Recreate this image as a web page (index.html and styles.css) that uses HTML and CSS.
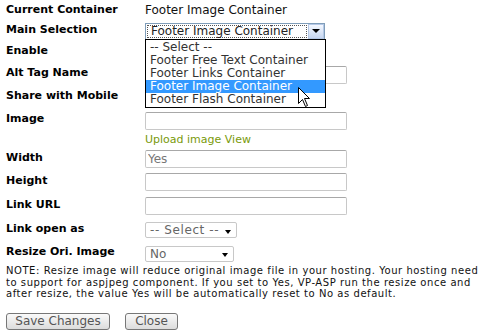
FILE: index.html
```html
<!DOCTYPE html>
<html lang="en">

<head>
    <meta charset="UTF-8">
    <title>Footer Container</title>
    <link rel="stylesheet" href="styles.css">
</head>

<body>

    <div class="form">
        <div class="label">Current Container</div>
        <div class="value">Footer Image Container</div>

        <div class="label">Main Selection</div>
        <div class="field">
            <div class="combo">
                <div class="combo-text">Footer Image Container</div>
                <div class="combo-btn"><span class="arrow"></span></div>
                <ul class="combo-list">
                    <li>-- Select --</li>
                    <li>Footer Free Text Container</li>
                    <li>Footer Links Container</li>
                    <li class="active">Footer Image Container</li>
                    <li>Footer Flash Container</li>
                </ul>
                <svg class="pointer" width="13" height="21" viewBox="0 0 13 21">
                    <path d="M0.5 0.5 L0.5 16.5 L4.5 12.5 L7.5 19.5 L9.5 18.5 L6.5 11.5 L11.5 11.5 Z" fill="#fff" stroke="#000" stroke-width="1"/>
                </svg>
            </div>
        </div>

        <div class="label">Enable</div>
        <div class="field"></div>

        <div class="label">Alt Tag Name</div>
        <div class="field"><input class="text" type="text"></div>

        <div class="label">Share with Mobile</div>
        <div class="field"></div>

        <div class="label">Image</div>
        <div class="field"><input class="text" type="text"></div>

        <div class="label"></div>
        <div class="field"><a class="upload" href="#">Upload image View</a></div>

        <div class="label">Width</div>
        <div class="field"><input class="text" type="text" value="Yes"></div>

        <div class="label">Height</div>
        <div class="field"><input class="text" type="text"></div>

        <div class="label">Link URL</div>
        <div class="field"><input class="text" type="text"></div>

        <div class="label">Link open as</div>
        <div class="field"><div class="pick wide">-- Select --<span class="arrow"></span></div></div>

        <div class="label">Resize Ori. Image</div>
        <div class="field"><div class="pick">No<span class="arrow"></span></div></div>
    </div>

    <p class="note">NOTE: Resize image will reduce original image file in your hosting. Your hosting need to support for aspjpeg component. If you set to Yes, VP-ASP run the resize once and after resize, the value Yes will be automatically reset to No as default.</p>

    <div class="actions">
        <button class="btn save">Save Changes</button>
        <button class="btn close">Close</button>
    </div>

</body>

</html>
```

FILE: styles.css
```css
body {
    margin: 0;
    padding: 0;
    background-color: #fff;
    font-family: 'DejaVu Sans', Verdana, sans-serif;
    font-size: 11px;
    color: #000;
}

.form {
    display: grid;
    grid-template-columns: 139px 1fr;
    grid-template-rows: 20px 20px 22px 23px 23px 23px 16px 22px 24px 24px 24px 23px;
    padding: 1px 0 0 6px;
    align-items: center;
}

.label {
    font-weight: bold;
    line-height: 14px;
    padding-bottom: 3px;
}

.value {
    font-size: 12px;
    line-height: 14px;
    padding-bottom: 2px;
    color: #111;
}

.field {
    display: flex;
    align-items: center;
}

.text {
    box-sizing: border-box;
    width: 202px;
    height: 18px;
    margin: 0;
    padding: 0 2px;
    border: 1px solid #c8c8c8;
    border-top-color: #a8a8a8;
    border-radius: 2px;
    font-family: inherit;
    font-size: 12px;
    color: #777;
}

.upload {
    color: #7a9a0a;
    text-decoration: none;
    line-height: 14px;
}

/* main selection dropdown */
.combo {
    position: relative;
    box-sizing: border-box;
    width: 180px;
    height: 17px;
    border: 1px solid #7f9db9;
    display: flex;
    background: #fff;
    font-size: 12px;
}

.combo-text {
    flex: 1;
    margin: 1px;
    padding-left: 3px;
    border: 1px dotted #555;
    line-height: 11px;
    color: #222;
}

.combo-btn {
    width: 16px;
    box-sizing: border-box;
    border: 1px solid #b5c8e6;
    background: linear-gradient(#f4f8ff, #c6d6f0);
    display: flex;
    align-items: center;
    justify-content: center;
}

.arrow {
    width: 0;
    height: 0;
    border-left: 4px solid transparent;
    border-right: 4px solid transparent;
    border-top: 4px solid #000;
}

.combo-list {
    position: absolute;
    top: 15px;
    left: -1px;
    width: 181px;
    box-sizing: border-box;
    margin: 0;
    padding: 1px 0;
    list-style: none;
    border: 1px solid #000;
    background: #fff;
    z-index: 2;
}

.combo-list li {
    height: 13px;
    line-height: 13px;
    padding-left: 4px;
    color: #333;
}

.combo-list li.active {
    background: #3399ff;
    color: #fff;
}

.pointer {
    position: absolute;
    left: 152px;
    top: 63px;
    z-index: 3;
}

/* small selects */
.pick {
    box-sizing: border-box;
    width: 89px;
    height: 16px;
    padding: 0 5px 0 4px;
    border: 1px solid #c8c8c8;
    border-radius: 2px;
    display: flex;
    align-items: center;
    justify-content: space-between;
    font-size: 12px;
    line-height: 14px;
    color: #666;
}

.pick.wide {
    width: 92px;
    letter-spacing: 0.6px;
}

.pick .arrow {
    margin-top: 3px;
    border-left-width: 3px;
    border-right-width: 3px;
}

.note {
    margin: 0 0 0 6px;
    font-size: 10px;
    line-height: 11.5px;
    letter-spacing: 0.55px;
    color: #111;
}

.actions {
    display: flex;
    gap: 15px;
    margin: 13px 0 0 6px;
}

.btn {
    box-sizing: border-box;
    height: 17px;
    padding: 0;
    border: 1px solid #777;
    border-radius: 3px;
    background: linear-gradient(#fafafa, #dcdcdc);
    font-family: inherit;
    font-size: 12px;
    line-height: 13px;
    color: #555;
}

.save {
    width: 104px;
}

.close {
    width: 53px;
}
```
